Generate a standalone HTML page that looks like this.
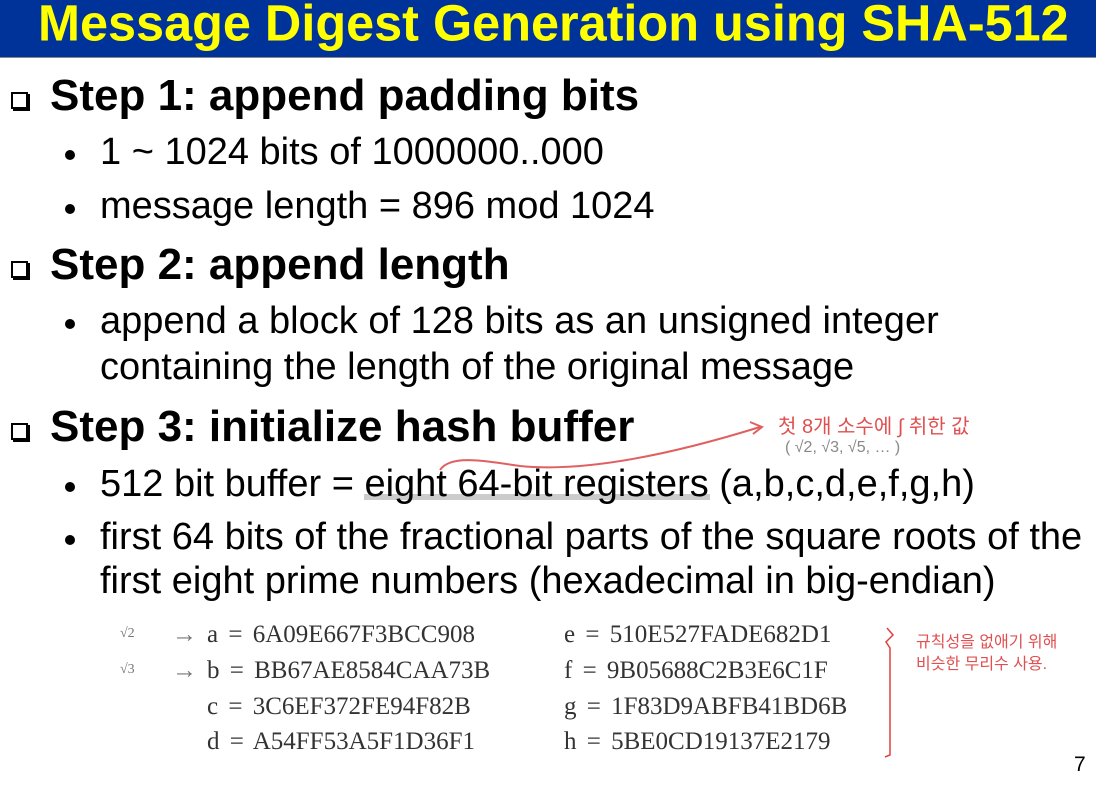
<!DOCTYPE html>
<html><head><meta charset="utf-8"><style>
body{margin:0;width:1096px;height:789px;background:#fff;position:relative;overflow:hidden;font-family:"Liberation Sans",Arial,sans-serif;}
.bar{position:absolute;left:0;top:0;width:1096px;height:57px;background:#003399;border-bottom:1px solid #888;}
.title{position:absolute;left:38px;top:-5px;font-size:48px;font-weight:bold;color:#ffff00;white-space:nowrap;transform-origin:left top;transform:scale(1.05,1.06);}
.h{position:absolute;left:50px;font-size:44px;font-weight:bold;color:#000;white-space:nowrap;}
.box{position:absolute;left:11px;width:13px;height:13px;border:2px solid #000;box-shadow:2px 2px 0 #000;}
.b{position:absolute;left:100px;font-size:38px;color:#000;white-space:nowrap;}
.dot{position:absolute;left:65px;width:10px;height:10px;border-radius:50%;background:#000;}
.t{position:absolute;font-family:"Liberation Serif",serif;font-size:25px;color:#333;white-space:nowrap;word-spacing:4px;}
.k{position:absolute;font-family:"Liberation Sans","Noto Sans CJK KR",sans-serif;color:#e05050;font-size:15px;white-space:nowrap;}
</style></head><body>
<div class="bar"></div>
<div class="title">Message Digest Generation using SHA-512</div>

<div class="box" style="top:92px"></div><div class="h" style="top:71px">Step 1: append padding bits</div>
<div class="dot" style="top:150px"></div><div class="b" style="top:131px">1 ~ 1024 bits of 1000000..000</div>
<div class="dot" style="top:204px"></div><div class="b" style="top:185px">message length = 896 mod 1024</div>

<div class="box" style="top:261px"></div><div class="h" style="top:240px">Step 2: append length</div>
<div class="dot" style="top:319px"></div><div class="b" style="top:300px">append a block of 128 bits as an unsigned integer</div>
<div class="b" style="top:346px">containing the length of the original message</div>

<div class="box" style="top:423px"></div><div class="h" style="top:402px">Step 3: initialize hash buffer</div>
<div style="position:absolute;left:364px;top:494px;width:346px;height:6px;background:#ccc"></div>
<div class="dot" style="top:482px"></div><div class="b" style="top:463px">512 bit buffer = eight 64-bit registers (a,b,c,d,e,f,g,h)</div>
<div class="dot" style="top:535px"></div><div class="b" style="top:516px">first 64 bits of the fractional parts of the square roots of the</div>
<div class="b" style="top:560px">first eight prime numbers (hexadecimal in big-endian)</div>

<svg style="position:absolute;left:0;top:0" width="1096" height="789">
<path d="M440 470 C450 455,480 460,520 466 C580 472,660 458,760 427" stroke="#e06060" stroke-width="2" fill="none"/>
<path d="M750 422 L762 427 L753 434" stroke="#e06060" stroke-width="2" fill="none"/>
<path d="M887 628 L893 635 L886 642 L890 648 L890 755 L885 757" stroke="#e04040" stroke-width="1.5" fill="none"/>
</svg>
<div class="k" style="left:778px;top:410px;font-size:20px">첫 8개 소수에 ∫ 취한 값</div>
<div class="k" style="left:785px;top:439px;color:#888;font-size:16px">( √2, √3, √5, … )</div>
<div class="k" style="left:916px;top:628px;font-size:16px">규칙성을 없애기 위해</div>
<div class="k" style="left:916px;top:650px;font-size:16px">비슷한 무리수 사용.</div>

<div class="t" style="left:120px;top:626px;font-size:14px;color:#777">√2</div>
<div class="t" style="left:172px;top:621px;color:#777">→</div>
<div class="t" style="left:120px;top:662px;font-size:14px;color:#777">√3</div>
<div class="t" style="left:172px;top:657px;color:#777">→</div>
<div class="t" style="left:207px;top:621px">a = 6A09E667F3BCC908</div>
<div class="t" style="left:207px;top:657px">b = BB67AE8584CAA73B</div>
<div class="t" style="left:207px;top:693px">c = 3C6EF372FE94F82B</div>
<div class="t" style="left:207px;top:728px">d = A54FF53A5F1D36F1</div>
<div class="t" style="left:564px;top:621px">e = 510E527FADE682D1</div>
<div class="t" style="left:564px;top:657px">f = 9B05688C2B3E6C1F</div>
<div class="t" style="left:564px;top:693px">g = 1F83D9ABFB41BD6B</div>
<div class="t" style="left:564px;top:728px">h = 5BE0CD19137E2179</div>
<div style="position:absolute;left:1074px;top:753px;font-size:21px">7</div>
</body></html>
